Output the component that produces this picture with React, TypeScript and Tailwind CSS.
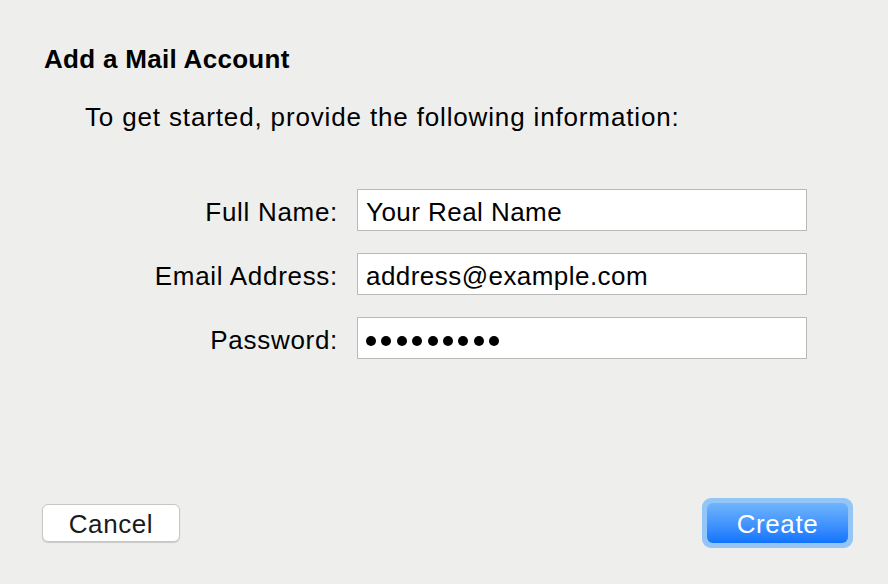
export default function App() {
  const fields = [
    { label: 'Full Name:', value: 'Your Real Name' },
    { label: 'Email Address:', value: 'address@example.com' },
    { label: 'Password:', value: '' },
  ];

  return (
    <div className="flex h-[584px] w-[888px] flex-col bg-[#eeefed] font-['Liberation_Sans',Arial,sans-serif] text-[26px] leading-[30px] text-black">
      <h1 className="pl-[44px] pt-[44px] font-bold tracking-[0.3px]">Add a Mail Account</h1>
      <p className="mt-[28px] pl-[85px] tracking-[0.85px]">To get started, provide the following information:</p>

      <div className="mt-[57px] grid grid-cols-[300px_450px] items-center gap-x-[19px] gap-y-[22px] pl-[38px]">
        {fields.map((field) => (
          <div key={field.label} className="contents">
            <label className="pt-[3px] text-right tracking-[0.7px]">{field.label}</label>
            <div className="flex h-[42px] items-center border border-[#b9b9b9] bg-white pl-[8px]">
              {field.value ? (
                <span className="pt-[3px] tracking-[0.45px]">{field.value}</span>
              ) : (
                <div className="mt-[6px] flex gap-[5.4px]">
                  {Array.from({ length: 9 }).map((_, index) => (
                    <span key={index} className="h-[10px] w-[10px] rounded-full bg-black" />
                  ))}
                </div>
              )}
            </div>
          </div>
        ))}
      </div>

      <div className="mt-auto flex items-center justify-between pb-[36px] pl-[42px] pr-[35px]">
        <button className="h-[38px] w-[138px] rounded-[6px] border border-[#c6c6c6] bg-white pt-[2px] tracking-[0.6px] text-[#1a1a1a] shadow-[0_1px_1px_rgba(0,0,0,0.15)]">
          Cancel
        </button>
        <div className="rounded-[9px] bg-[#93c6f7] p-[5px]">
          <button className="h-[40px] w-[141px] rounded-[6px] bg-gradient-to-b from-[#6fb4fb] to-[#0f74fd] pt-[2px] tracking-[0.6px] text-white">
            Create
          </button>
        </div>
      </div>
    </div>
  );
}
